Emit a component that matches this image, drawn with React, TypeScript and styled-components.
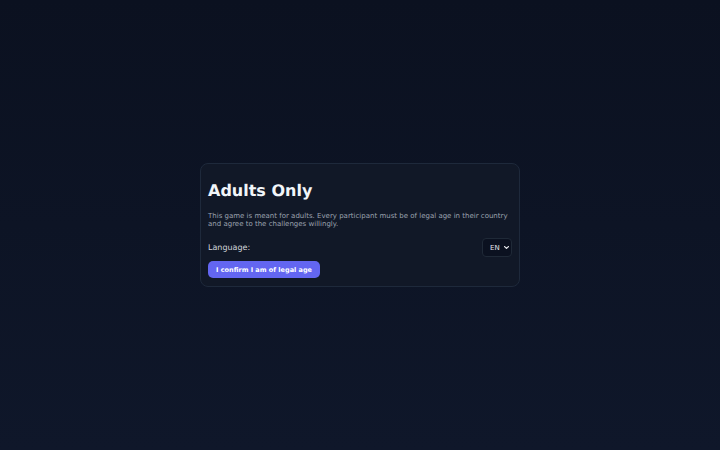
import React from "react";
import styled, { createGlobalStyle } from "styled-components";

const Global = createGlobalStyle`
  html, body { margin: 0; padding: 0; height: 100%; }
  body {
    font-family: "DejaVu Sans", sans-serif;
    text-rendering: geometricPrecision;
    background: linear-gradient(180deg, #0b1120 0%, #0f172a 100%);
    color: #e2e8f0;
  }
  #root { height: 100%; }
`;

const Page = styled.div`
  height: 450px;
  display: flex;
  align-items: center;
  justify-content: center;
`;

const Card = styled.div`
  width: 304px;
  height: 107px;
  padding: 8px 7px 7px;
  background: #111827;
  border: 1px solid #1e293b;
  border-radius: 8px;
  display: flex;
  flex-direction: column;
`;

const Title = styled.h1`
  margin: 9px 0 0;
  font-size: 16px;
  line-height: 20px;
  font-weight: 700;
  color: #f1f5f9;
`;

const Text = styled.p`
  margin: 11px 0 0;
  font-size: 7px;
  line-height: 8px;
  color: #9ca3af;
`;

const Row = styled.div`
  margin-top: 10px;
  height: 19px;
  display: flex;
  align-items: center;
  justify-content: space-between;
`;

const Label = styled.label`
  font-size: 8px;
  line-height: 12px;
  color: #d1d5db;
`;

const SelectWrap = styled.div`
  position: relative;
  width: 30px;
  height: 19px;
`;

const Select = styled.select`
  display: block;
  appearance: none;
  -webkit-appearance: none;
  box-sizing: border-box;
  width: 30px;
  height: 19px;
  margin: 0;
  padding: 0 0 0 7px;
  font-family: "DejaVu Sans", sans-serif;
  font-size: 7px;
  background: #0b1120;
  color: #e5e7eb;
  border: 1px solid #1f2937;
  border-radius: 4px;
  outline: none;
`;

const Chevron = styled.svg`
  position: absolute;
  right: 3px;
  top: 8px;
  width: 5px;
  height: 3px;
  pointer-events: none;
`;

const Button = styled.button`
  margin-top: 4px;
  align-self: flex-start;
  height: 17px;
  padding: 0 8px;
  border: none;
  border-radius: 5px;
  background: #6366f1;
  color: #ffffff;
  font-family: "DejaVu Sans", sans-serif;
  font-size: 6.5px;
  font-weight: 700;
`;

export default function App() {
  return (
    <>
      <Global />
      <Page>
        <Card>
          <Title>Adults Only</Title>
          <Text>
            This game is meant for adults. Every participant must be of legal age in their country and agree to the challenges willingly.
          </Text>
          <Row>
            <Label>Language:</Label>
            <SelectWrap>
              <Select defaultValue="en">
                <option value="en">EN</option>
              </Select>
              <Chevron viewBox="0 0 5 3">
                <path d="M0.6 0.6 L2.5 2.4 L4.4 0.6" fill="none" stroke="#e5e7eb" strokeWidth="1.3" strokeLinecap="round" strokeLinejoin="round" />
              </Chevron>
            </SelectWrap>
          </Row>
          <Button>I confirm I am of legal age</Button>
        </Card>
      </Page>
    </>
  );
}
